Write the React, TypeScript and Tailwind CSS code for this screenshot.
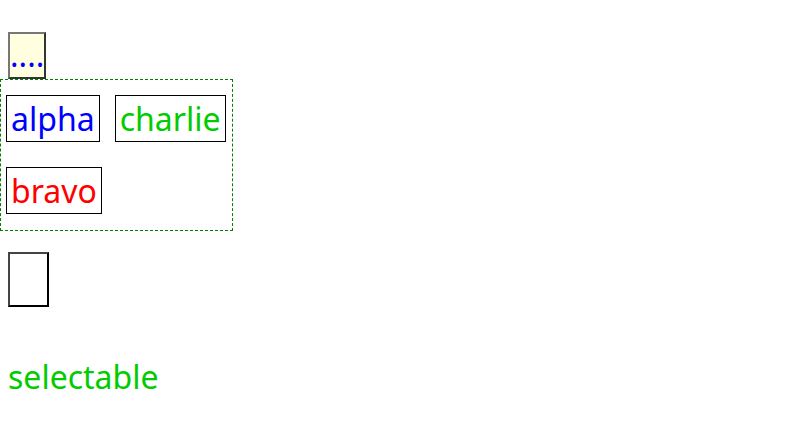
import React from 'react';

const items = [
  { label: 'alpha', color: 'text-[#0000ff]' },
  { label: 'charlie', color: 'text-[#00cc00]' },
  { label: 'bravo', color: 'text-[#ff0000]' },
];

export default function App() {
  return (
    <div className="min-h-[432px] w-[800px] bg-white font-['Noto_Sans',sans-serif] text-[32px] leading-[45px]">
      <div className="pt-[32px]">
        {/* handle */}
        <div className="ml-[8px] h-[47px] w-[38px] overflow-hidden border-2 border-t-[#777] border-l-[#777] border-b-[#333] border-r-[#333] bg-[#ffffe0] text-[#0000ff] leading-[42px]">
          ....
        </div>

        {/* list */}
        <div className="flex w-[233px] flex-wrap gap-x-[15px] gap-y-[25px] border border-dashed border-[#008000] pb-[16px] pl-[5px] pr-[5px] pt-[15px]">
          {items.map((item) => (
            <div key={item.label} className={`border border-black px-[4px] ${item.color}`}>
              {item.label}
            </div>
          ))}
        </div>

        {/* drop target */}
        <div className="ml-[8px] mt-[21px] h-[55px] w-[41px] border-2 border-t-[#444] border-l-[#444] border-b-black border-r-black" />

        <div className="ml-[8px] mt-[47px] text-[#00cc00]">selectable</div>
      </div>
    </div>
  );
}
